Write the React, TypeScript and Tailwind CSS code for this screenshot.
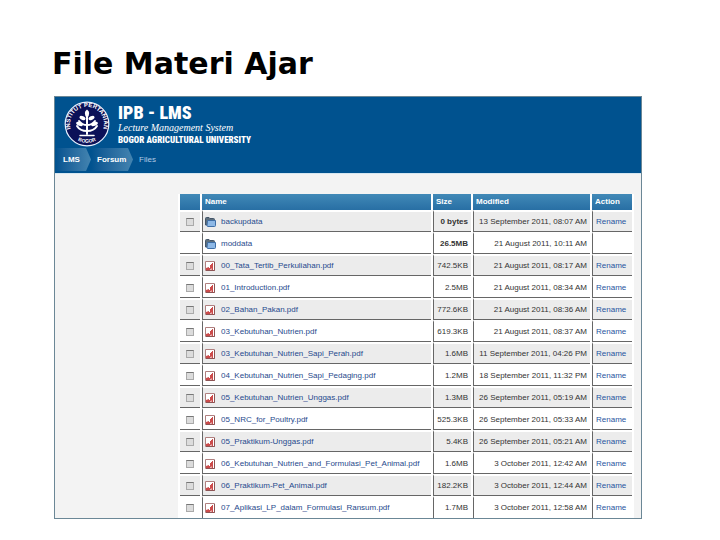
import clsx from "clsx";

type Entry = {
  name: string;
  size: string;
  modified: string;
  folder?: boolean;
  locked?: boolean;
};

const entries: Entry[] = [
  { name: "backupdata", size: "0 bytes", modified: "13 September 2011, 08:07 AM", folder: true },
  { name: "moddata", size: "26.5MB", modified: "21 August 2011, 10:11 AM", folder: true, locked: true },
  { name: "00_Tata_Tertib_Perkuliahan.pdf", size: "742.5KB", modified: "21 August 2011, 08:17 AM" },
  { name: "01_Introduction.pdf", size: "2.5MB", modified: "21 August 2011, 08:34 AM" },
  { name: "02_Bahan_Pakan.pdf", size: "772.6KB", modified: "21 August 2011, 08:36 AM" },
  { name: "03_Kebutuhan_Nutrien.pdf", size: "619.3KB", modified: "21 August 2011, 08:37 AM" },
  { name: "03_Kebutuhan_Nutrien_Sapi_Perah.pdf", size: "1.6MB", modified: "11 September 2011, 04:26 PM" },
  { name: "04_Kebutuhan_Nutrien_Sapi_Pedaging.pdf", size: "1.2MB", modified: "18 September 2011, 11:32 PM" },
  { name: "05_Kebutuhan_Nutrien_Unggas.pdf", size: "1.3MB", modified: "26 September 2011, 05:19 AM" },
  { name: "05_NRC_for_Poultry.pdf", size: "525.3KB", modified: "26 September 2011, 05:33 AM" },
  { name: "05_Praktikum-Unggas.pdf", size: "5.4KB", modified: "26 September 2011, 05:21 AM" },
  { name: "06_Kebutuhan_Nutrien_and_Formulasi_Pet_Animal.pdf", size: "1.6MB", modified: "3 October 2011, 12:42 AM" },
  { name: "06_Praktikum-Pet_Animal.pdf", size: "182.2KB", modified: "3 October 2011, 12:44 AM" },
  { name: "07_Aplikasi_LP_dalam_Formulasi_Ransum.pdf", size: "1.7MB", modified: "3 October 2011, 12:58 AM" },
];

export default function App() {
  return (
    <main className="bg-white pt-11 pr-[78px] pb-5 pl-[54px]">
      <h1 className="-ml-[2px] font-['DejaVu_Sans'] text-[30px] leading-10 font-bold text-black">
        File Materi Ajar
      </h1>
      <div className="mt-3 overflow-hidden border border-[#6b8796] bg-[#f3f3f3] font-['Liberation_Sans']">
        <SiteHeader />
        <div className="pt-5 pr-[7px] pl-[123px]">
          <FileTable />
        </div>
      </div>
    </main>
  );
}

function SiteHeader() {
  return (
    <header className="border-b border-[#d5e6f0] bg-[#00528f]">
      <div className="flex gap-2 pt-1 pl-[9px] text-white">
        <Seal />
        <div className="pt-[3px] font-black whitespace-nowrap font-['Liberation_Sans_Narrow','Roboto_Condensed','Liberation_Sans']">
          <p className="text-[18px] leading-[18px]">IPB - LMS</p>
          <p className="font-['Liberation_Serif'] text-[10px] leading-[12px] font-normal italic">
            Lecture Management System
          </p>
          <p className="text-[9px] leading-[13px]">BOGOR AGRICULTURAL UNIVERSITY</p>
        </div>
      </div>
      <nav
        aria-label="Breadcrumb"
        className="mt-px flex h-[25px] items-start text-[8px] leading-[24px] text-white"
      >
        <Crumb label="LMS" className="w-9 pl-2" />
        <Crumb label="Forsum" className="w-[42px] pl-[6px]" />
        <span className="pl-[6px] text-[#b4cbe4]">Files</span>
      </nav>
    </header>
  );
}

function Crumb({ label, className }: { label: string; className: string }) {
  return (
    <a
      href="#"
      className={clsx(
        "h-[23px] bg-gradient-to-r from-[#00528f] to-[#4384b0] font-bold [clip-path:polygon(0_0,calc(100%-5px)_0,100%_50%,calc(100%-5px)_100%,0_100%)]",
        className,
      )}
    >
      {label}
    </a>
  );
}

function FileTable() {
  return (
    <table className="w-full table-fixed border-separate border-spacing-x-[2px] border-spacing-y-0 bg-white text-[8px] leading-[12px] text-[#333]">
      <thead>
        <tr className="text-left text-white [&>th]:h-4 [&>th]:bg-gradient-to-b [&>th]:from-[#4189b7] [&>th]:to-[#286fa4] [&>th]:px-[3px] [&>th]:py-0">
          <th className="w-5" aria-label="Select" />
          <th>Name</th>
          <th className="w-[38px]">Size</th>
          <th className="w-[117px]">Modified</th>
          <th className="w-[40px]">Action</th>
        </tr>
      </thead>
      <tbody>
        {entries.map((entry, i) => (
          <FileRow key={entry.name} entry={entry} shaded={i % 2 === 0} />
        ))}
      </tbody>
    </table>
  );
}

function FileRow({ entry, shaded }: { entry: Entry; shaded: boolean }) {
  return (
    <tr
      className={clsx(
        "[&>td]:h-[22px] [&>td]:border-t-2 [&>td]:border-b [&>td]:border-t-white [&>td]:border-b-[#666] [&>td]:p-0 [&>td]:whitespace-nowrap last:[&>td]:border-b-0 [&>td+td]:border-l [&>td+td]:border-l-[#666]",
        shaded && "[&>td]:bg-[#ececec]",
      )}
    >
      <td>
        {!entry.locked && (
          <input
            type="checkbox"
            aria-label={`Select ${entry.name}`}
            className="mx-auto block size-2 appearance-none border border-[#aaa] border-t-[#777] bg-[#dcdcdc]"
          />
        )}
      </td>
      <td>
        <a href="#" className="flex items-center gap-[5px] pl-[2px] text-[#1f4a8c]">
          {entry.folder ? <FolderIcon /> : <PdfIcon />}
          {entry.name}
        </a>
      </td>
      <td>
        <div className={clsx("pr-[3px] text-right", entry.folder && "font-bold")}>
          {entry.size}
        </div>
      </td>
      <td>
        <div className="pr-[3px] text-right">{entry.modified}</div>
      </td>
      <td>
        {!entry.locked && (
          <a href="#" className="block pl-[3px] text-[#1f55a0]">
            Rename
          </a>
        )}
      </td>
    </tr>
  );
}

function FolderIcon() {
  return (
    <svg className="h-[10px] w-[11px] shrink-0" viewBox="0 0 11 10" aria-hidden="true">
      <path d="M.5 8V1.5Q.5.5 1.5.5H4L5 1.5H8.5Q9.5 1.500 9.5 2.5V8Z" fill="#5d6f7d" stroke="#44566a" />
      <path d="M2.500 3.500H10.500V8.500Q10.500 9.500 9.500 9.500H3Q2 9.500 2 8.500Z" fill="#8db8e6" stroke="#3f6ea6" />
    </svg>
  );
}

function PdfIcon() {
  return (
    <svg className="h-[10px] w-[11px] shrink-0" viewBox="0 0 11 10" aria-hidden="true">
      <path d="M.5.5H9.5V9.5H.5Z" fill="#fff" stroke="#b08080" />
      <path d="M1 9V7L4 6V7H5V4H6V3H7V2H8V9H6.500V7L5 9Z" fill="#cc4b4b" />
      <path d="M9.5 1V9.5H1" fill="none" stroke="#8e5454" />
    </svg>
  );
}

function Seal() {
  return (
    <svg className="size-[46px] shrink-0" viewBox="0 0 46 46" role="img" aria-label="Institut Pertanian Bogor">
      <defs>
        <path id="seal-top" d="M8.3 31.5A17 17 0 1 1 37.7 31.5" />
        <path id="seal-bottom" d="M9 36A19.8 19.8 0 0 0 37 36" />
      </defs>
      <circle cx="23" cy="23" r="21.8" fill="#0b1158" stroke="#e8f1ff" strokeWidth="1.2" />
      <g fill="#fff" fontFamily="Liberation Sans" fontWeight="700">
        <text fontSize="6">
          <textPath href="#seal-top" startOffset="50%" textAnchor="middle">INSTITUT PERTANIAN</textPath>
        </text>
        <text fontSize="5">
          <textPath href="#seal-bottom" startOffset="50%" textAnchor="middle">BOGOR</textPath>
        </text>
      </g>
      <g fill="none" stroke="#fff" strokeLinecap="round">
        <path d="M23 15V33" strokeWidth="2" />
        <path d="M16 34.5H30" strokeWidth="1.5" />
        <path d="M23 30Q16 30 13 25M23 30Q30 30 33 25" strokeWidth="2" />
        <path d="M23 24Q18 24 15 20M23 24Q28 24 31 20" strokeWidth="2" />
      </g>
      <g fill="#fff">
        <path d="M23 8.5Q27.5 12 23 17Q18.5 12 23 8.5Z" />
        <ellipse cx="18.5" cy="17" rx="3.2" ry="1.8" transform="rotate(25 18.5 17)" />
        <ellipse cx="27.5" cy="17" rx="3.2" ry="1.8" transform="rotate(-25 27.5 17)" />
        <ellipse cx="15.5" cy="23" rx="3.5" ry="1.8" transform="rotate(20 15.5 23)" />
        <ellipse cx="30.5" cy="23" rx="3.5" ry="1.8" transform="rotate(-20 30.5 23)" />
      </g>
    </svg>
  );
}
